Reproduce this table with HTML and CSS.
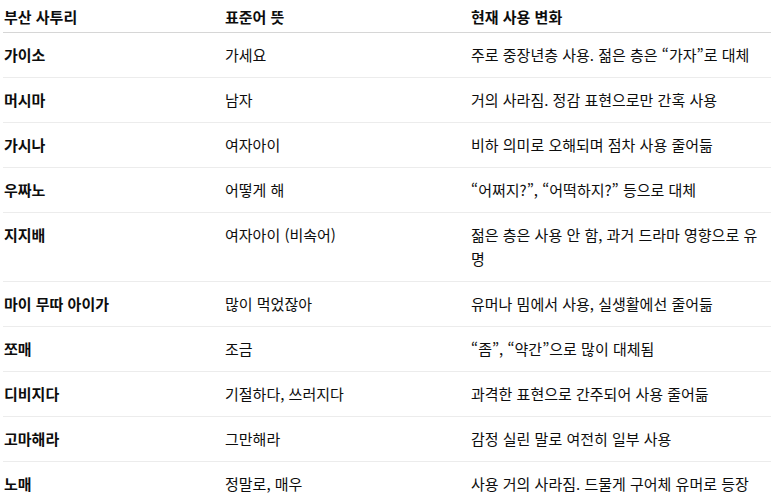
FILE: index.html
```html
<!DOCTYPE html>
<html lang="ko">
<head>
<meta charset="utf-8">
<title>부산 사투리</title>
<link rel="stylesheet" href="styles.css">
</head>
<body>
<table class="dialect">
  <colgroup>
    <col class="c1">
    <col class="c2">
    <col class="c3">
  </colgroup>
  <thead>
    <tr><th>부산 사투리</th><th>표준어 뜻</th><th>현재 사용 변화</th></tr>
  </thead>
  <tbody>
    <tr><td class="term">가이소</td><td>가세요</td><td>주로 중장년층 사용. 젊은 층은 “가자”로 대체</td></tr>
    <tr><td class="term">머시마</td><td>남자</td><td>거의 사라짐. 정감 표현으로만 간혹 사용</td></tr>
    <tr><td class="term">가시나</td><td>여자아이</td><td>비하 의미로 오해되며 점차 사용 줄어듦</td></tr>
    <tr><td class="term">우짜노</td><td>어떻게 해</td><td>“어쩌지?”, “어떡하지?” 등으로 대체</td></tr>
    <tr><td class="term">지지배</td><td>여자아이 (비속어)</td><td>젊은 층은 사용 안 함, 과거 드라마 영향으로 유명</td></tr>
    <tr><td class="term">마이 무따 아이가</td><td>많이 먹었잖아</td><td>유머나 밈에서 사용, 실생활에선 줄어듦</td></tr>
    <tr><td class="term">쪼매</td><td>조금</td><td>“좀”, “약간”으로 많이 대체됨</td></tr>
    <tr><td class="term">디비지다</td><td>기절하다, 쓰러지다</td><td>과격한 표현으로 간주되어 사용 줄어듦</td></tr>
    <tr><td class="term">고마해라</td><td>그만해라</td><td>감정 실린 말로 여전히 일부 사용</td></tr>
    <tr><td class="term">노매</td><td>정말로, 매우</td><td>사용 거의 사라짐. 드물게 구어체 유머로 등장</td></tr>
  </tbody>
</table>
</body>
</html>
```

FILE: styles.css
```css
html, body {
  margin: 0;
  padding: 0;
  background: #ffffff;
}

body {
  font-family: "Noto Sans CJK KR", "Noto Sans", sans-serif;
  font-size: 15px;
  line-height: 24px;
  color: #0d0d0d;
}

.dialect {
  margin-left: 3px;
  width: 768px;
  border-collapse: collapse;
  table-layout: fixed;
}

.c1 { width: 221px; }
.c2 { width: 246px; }
.c3 { width: 301px; }

.dialect th {
  text-align: left;
  font-weight: 700;
  padding: 5px 0 3px 1px;
  border-bottom: 1px solid #d6d6d6;
}

.dialect td {
  padding: 10px 0 10px 1px;
  vertical-align: top;
  border-bottom: 1px solid #ececec;
  word-break: break-all;
}

.dialect td:last-child {
  padding-right: 6px;
}

.dialect td.term {
  font-weight: 700;
}
```
